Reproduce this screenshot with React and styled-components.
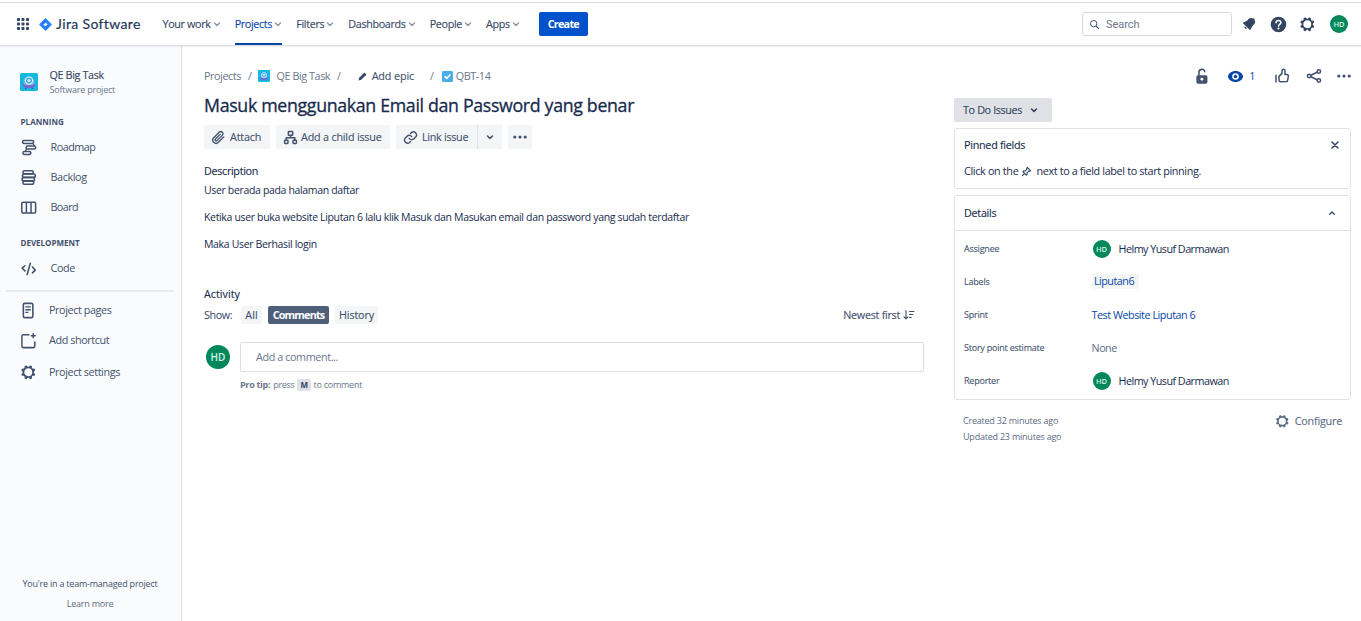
import React from "react";
import styled, { createGlobalStyle } from "styled-components";

const Global = createGlobalStyle`
  *, *::before, *::after { box-sizing: border-box; }
  html, body { margin: 0; height: 100%; overflow: hidden; background: #fff; }
  body { font-family: "Open Sans", "Noto Sans", sans-serif; font-size: 11px; color: #172b4d; }
  svg { display: block; flex: none; }
`;

const T = styled.span`
  white-space: nowrap;
  font-size: ${(p) => p.$s || 10.8}px;
  font-weight: ${(p) => p.$b || 400};
  letter-spacing: ${(p) => p.$ls ?? -0.4}px;
  color: ${(p) => p.$c || "inherit"};
  line-height: 14px;
`;
const Medium = styled(T)`
  -webkit-text-stroke: 0.12px currentColor;
`;
const Small = styled(T)`
  font-size: 9px;
  letter-spacing: ${(p) => p.$ls ?? -0.22}px;
`;
const FieldName = styled(Small)`
  color: #42526e;
  padding-top: 1px;
  -webkit-text-stroke: 0.1px currentColor;
`;

const Page = styled.div`
  height: 621px;
  padding-top: 2px;
  display: flex;
  flex-direction: column;
`;
const Header = styled.header`
  height: 44px;
  flex: none;
  display: flex;
  align-items: center;
  border-top: 1px solid #d5d7da;
  border-bottom: 1px solid #dcdee3;
  box-shadow: 0 1px 1px rgba(9, 30, 66, 0.06);
  padding: 0 13px 0 16px;
  color: #344563;
  position: relative;
`;
const Brand = styled.div`
  display: flex;
  align-items: center;
  width: 146.5px;
  color: #253858;
`;
const BrandName = styled(T)`
  font-family: Lato, sans-serif;
  font-size: 14px;
  letter-spacing: 0.36px;
  -webkit-text-stroke: 0.2px currentColor;
  margin-left: 4px;
`;
const Nav = styled.nav`
  display: flex;
  height: 42px;
  gap: 14.1px;
`;
const NavItem = styled.div`
  display: flex;
  align-items: center;
  gap: 2px;
  color: ${(p) => (p.$active ? "#0747a6" : "#344563")};
  box-shadow: ${(p) => (p.$active ? "inset 0 -2px 0 #0747a6" : "none")};
`;
const CreateButton = styled.button`
  margin-left: 19px;
  width: 49px;
  height: 24px;
  border: 0;
  border-radius: 2px;
  background: #0052cc;
  color: #fff;
  padding: 0;
  font-family: inherit;
  display: flex;
  align-items: center;
  justify-content: center;
`;
const SearchBox = styled.div`
  margin-left: auto;
  width: 150px;
  height: 24px;
  border: 1px solid #d4d8de;
  border-radius: 3px;
  display: flex;
  align-items: center;
  gap: 6px;
  padding: 1px 0 0 6px;
  color: #6b778c;
`;
const SearchText = styled(T)`
  font-family: Roboto, sans-serif;
  font-size: 11px;
  letter-spacing: -0.05px;
`;
const HeaderIcons = styled.div`
  display: flex;
  align-items: center;
  gap: 10.7px;
  margin-left: 8px;
`;
const Avatar = styled.div`
  width: ${(p) => p.$d}px;
  height: ${(p) => p.$d}px;
  border-radius: 50%;
  background: #00875a;
  color: #d9f2e7;
  display: flex;
  align-items: center;
  justify-content: center;
  font: 600 ${(p) => p.$f}px "Open Sans", sans-serif;
  flex: none;
`;
const HeaderAvatar = styled(Avatar)`
  margin-left: 2px;
`;

const Body = styled.div`
  flex: 1;
  display: flex;
  min-height: 0;
`;
const Sidebar = styled.aside`
  width: 182px;
  flex: none;
  background: #fafbfc;
  border-right: 1px solid #dfe1e6;
  display: flex;
  flex-direction: column;
  color: #42526e;
`;
const ProjectHead = styled.div`
  display: flex;
  align-items: center;
  gap: 11.5px;
  padding-left: 20px;
  margin-top: 21px;
  height: 30px;
`;
const ProjectNames = styled.div`
  display: flex;
  flex-direction: column;
  gap: 1px;
`;
const SectionTitle = styled.div`
  display: flex;
  align-items: center;
  height: 14px;
  padding-left: 20.5px;
  margin-top: ${(p) => p.$mt}px;
`;
const SideItem = styled.div`
  display: flex;
  align-items: center;
  height: 30px;
  padding-left: 19px;
  gap: ${(p) => p.$gap || 12.5}px;
  margin-top: ${(p) => p.$mt || 0}px;
`;
const SideRule = styled.div`
  height: 2px;
  background: #e8eaed;
  margin: 7px 7px 0 6px;
`;
const SideFooter = styled.div`
  margin-top: auto;
  height: 44px;
  display: flex;
  flex-direction: column;
  align-items: center;
  gap: 6px;
  padding-right: 1px;
`;

const Main = styled.main`
  flex: 1;
  display: flex;
  gap: 30px;
  padding: 20px 0 0 22px;
`;
const Content = styled.section`
  width: 720px;
`;
const Crumbs = styled.div`
  display: flex;
  align-items: center;
  height: 20px;
  color: #6b778c;
`;
const Gap = styled.span`
  width: ${(p) => p.$w}px;
  flex: none;
`;
const Title = styled.h1`
  margin: 5px 0 6px;
  height: 28px;
  display: flex;
  align-items: center;
`;
const TitleText = styled(T)`
  font-size: 17.8px;
  letter-spacing: -0.34px;
  -webkit-text-stroke: 0.3px currentColor;
`;
const Actions = styled.div`
  display: flex;
  gap: 6px;
`;
const ActionButton = styled.div`
  height: 24px;
  width: ${(p) => p.$w}px;
  background: #f4f5f7;
  border-radius: 2px;
  display: flex;
  align-items: center;
  gap: ${(p) => p.$gap ?? 4}px;
  padding-left: 7px;
  color: #42526e;
`;
const SplitButton = styled.div`
  display: flex;
  gap: 1px;
  background: #dfe1e6;
`;
const IconButton = styled.div`
  width: 24px;
  height: 24px;
  background: #f4f5f7;
  border-radius: 2px;
  color: #42526e;
  display: flex;
  align-items: center;
  justify-content: center;
`;
const Line = styled.div`
  display: flex;
  align-items: center;
  height: 14px;
  margin-top: ${(p) => p.$mt}px;
`;
const Paragraph = styled(T)`
  font-size: 10.5px;
  letter-spacing: -0.34px;
`;
const ShowRow = styled.div`
  display: flex;
  align-items: center;
  height: 18px;
  margin-top: 5px;
`;
const ShowLabel = styled.div`
  width: 37px;
  display: flex;
  color: #344563;
`;
const Pill = styled.div`
  height: 18px;
  width: ${(p) => p.$w}px;
  border-radius: 2px;
  display: flex;
  align-items: center;
  justify-content: center;
  background: ${(p) => (p.$active ? "#505f79" : "#f4f5f7")};
  color: ${(p) => (p.$active ? "#fff" : "#42526e")};
  margin-right: 6px;
`;
const SortBy = styled.div`
  margin-left: auto;
  margin-right: 9px;
  display: flex;
  align-items: center;
  gap: 3px;
  color: #42526e;
`;
const CommentRow = styled.div`
  display: flex;
  align-items: center;
  gap: 10px;
  margin-top: 18px;
  padding-left: 2px;
`;
const CommentBox = styled.div`
  flex: 1;
  height: 30px;
  border: 1px solid #dadde2;
  border-radius: 2px;
  padding-left: 15px;
  display: flex;
  align-items: center;
`;
const ProTip = styled.div`
  display: flex;
  align-items: center;
  height: 14px;
  margin: 6px 0 0 36px;
  color: #6b778c;
`;
const Key = styled.span`
  width: 14px;
  height: 12px;
  margin: 0 2.5px;
  background: #dfe1e6;
  border-radius: 2px;
  color: #344563;
  display: flex;
  align-items: center;
  justify-content: center;
`;

const Side = styled.section`
  width: 397px;
`;
const Tools = styled.div`
  height: 20px;
  display: flex;
  align-items: center;
  justify-content: flex-end;
  color: #42526e;
  margin-right: -1px;
`;
const StatusButton = styled.div`
  margin-top: 12px;
  width: 98px;
  height: 24px;
  border-radius: 2px;
  background: #dfe1e6;
  color: #344563;
  display: flex;
  align-items: center;
  gap: 8px;
  padding-left: 9px;
`;
const Panel = styled.div`
  border: 1px solid #dfe1e6;
  border-radius: 3px;
  margin-top: 6px;
  height: ${(p) => p.$h}px;
`;
const PanelHead = styled.div`
  height: ${(p) => p.$h}px;
  display: flex;
  align-items: center;
  justify-content: space-between;
  padding: 0 ${(p) => p.$pr}px 0 9px;
  border-bottom: ${(p) => (p.$line ? "1px solid #dfe1e6" : "0")};
`;
const PanelText = styled.div`
  display: flex;
  align-items: center;
  height: 20px;
  padding-left: 9px;
`;
const Fields = styled.div`
  padding-top: 1px;
`;
const Field = styled.div`
  height: 33px;
  display: grid;
  grid-template-columns: 127.5px 1fr;
  align-items: center;
  padding-left: 9px;
`;
const Person = styled.div`
  display: flex;
  align-items: center;
  gap: 8px;
  padding-left: 1px;
`;
const Label = styled.div`
  width: 47px;
  height: 15px;
  border-radius: 2px;
  background: #f4f5f7;
  display: flex;
  align-items: center;
  justify-content: center;
  padding: 0 2px 2px 0;
`;
const Meta = styled.div`
  display: flex;
  justify-content: space-between;
  padding: 13px 9px 0;
  color: #5e6c84;
`;
const Dates = styled.div`
  display: flex;
  flex-direction: column;
  gap: 2px;
  padding-top: 1px;
`;
const Configure = styled.div`
  display: flex;
  align-items: center;
  gap: 4px;
  height: 16px;
`;

const Svg = ({ w = 19, h, vb = "0 0 24 24", children }) => (
  <svg width={w} height={h || w} viewBox={vb} fill="none">{children}</svg>
);
const Chevron = ({ up, w = 8, c = "#8993a4", sw = 1.4 }) => (
  <Svg w={w} vb="0 0 8 8">
    <path d={up ? "M1.7 5.2 4 3 6.3 5.2" : "M1.5 3 4 5.4 6.5 3"} stroke={c} strokeWidth={sw} strokeLinecap="round" strokeLinejoin="round" />
  </Svg>
);
const Gear = ({ w = 18 }) => (
  <Svg w={w}>
    <path fill="currentColor" fillRule="evenodd" d="M11.701 16.7a5.002 5.002 0 110-10.003 5.002 5.002 0 010 10.004m8.368-3.117a1.995 1.995 0 01-1.346-1.885c0-.876.563-1.613 1.345-1.885a.48.48 0 00.315-.574 8.947 8.947 0 00-.836-1.993.477.477 0 00-.598-.195 2.04 2.04 0 01-1.29.08 1.988 1.988 0 01-1.404-1.395 2.04 2.04 0 01.076-1.297.478.478 0 00-.196-.597 8.98 8.98 0 00-1.975-.826.479.479 0 00-.574.314 1.995 1.995 0 01-1.885 1.346 1.994 1.994 0 01-1.884-1.345.482.482 0 00-.575-.315c-.708.2-1.379.485-2.004.842a.47.47 0 00-.198.582A2.002 2.002 0 014.445 7.06a.478.478 0 00-.595.196 8.946 8.946 0 00-.833 1.994.48.48 0 00.308.572 1.995 1.995 0 011.323 1.877c0 .867-.552 1.599-1.324 1.877a.479.479 0 00-.308.57 8.99 8.99 0 00.723 1.79.477.477 0 00.624.194c.595-.273 1.343-.264 2.104.238.117.077.225.185.302.3.527.8.512 1.58.198 2.188a.473.473 0 00.168.628 8.946 8.946 0 002.11.897.474.474 0 00.57-.313 1.995 1.995 0 011.886-1.353c.878 0 1.618.567 1.887 1.353a.475.475 0 00.57.313 8.964 8.964 0 002.084-.883.473.473 0 00.167-.631c-.318-.608-.337-1.393.191-2.195.077-.116.185-.225.302-.302.772-.511 1.527-.513 2.125-.23a.477.477 0 00.628-.19 8.925 8.925 0 00.728-1.793.478.478 0 00-.314-.573" />
  </Svg>
);
const Dots = () => (
  <Svg w={16} h={6} vb="0 0 16 6">
    <g fill="currentColor"><circle cx="2.8" cy="3" r="1.6" /><circle cx="8" cy="3" r="1.6" /><circle cx="13.2" cy="3" r="1.6" /></g>
  </Svg>
);
const ProjectIcon = ({ w }) => (
  <Svg w={w} vb="0 0 18 18">
    <rect width="18" height="18" rx="1.6" fill="#12b9dc" />
    <path d="M3.6 12V8.600a5.400 5.400 0 0 1 10.800 0V12z" fill="#6fb6ee" />
    <circle cx="9" cy="7.600" r="3.600" fill="#3fa9e0" stroke="#e4f6ff" strokeWidth="1.100" />
    <circle cx="9" cy="7.400" r="1.500" fill="#e4f6ff" />
    <path d="M2.600 10.600c1.500 1.300 3.600 2 6.400 2s4.900-.7 6.400-2c.4 2.800-1.800 4.600-6.400 4.600s-6.800-1.800-6.400-4.600z" fill="#7a66cc" />
    <path d="M5.600 14.800v1.200M12.400 14.800v1.200" stroke="#5243aa" strokeWidth="1.200" />
  </Svg>
);

const navItems = ["Your work", "Projects", "Filters", "Dashboards", "People", "Apps"];
const gridSteps = [1, 5.5, 10];

export default function App() {
  return (
    <>
      <Global />
      <Page>
        <Header>
          <Brand>
            <Svg w={14} vb="0 0 14 14">
              {gridSteps.map((y) => gridSteps.map((x) => <rect key={x + "-" + y} x={x} y={y} width="3" height="3" rx=".8" fill="#344563" />))}
            </Svg>
            <Gap $w={9} />
            <Svg w={13} vb="0 0 13 13">
              <path d="M6.5 0 13 6.500 6.500 13 0 6.500z" fill="#2684ff" />
              <path d="M6.500 4.400 8.600 6.500 6.500 8.600 4.400 6.500z" fill="#fff" />
              <path d="M6.500 1.500v2.900L4.400 6.500 3 4.800zM6.500 11.500V8.600l2.100-2.100L10 8.200z" fill="#0f5fd8" opacity=".4" />
            </Svg>
            <BrandName>Jira Software</BrandName>
          </Brand>
          <Nav>
            {navItems.map((n) => (
              <NavItem key={n} $active={n === "Projects"}>
                <Medium $ls={-0.36}>{n}</Medium>
                <Chevron />
              </NavItem>
            ))}
          </Nav>
          <CreateButton><T $b={700} $ls={-0.75}>Create</T></CreateButton>
          <SearchBox>
            <Svg w={11} vb="0 0 11 11">
              <circle cx="4.700" cy="4.700" r="3.200" stroke="#42526e" strokeWidth="1" />
              <path d="m7.200 7.200 2.300 2.300" stroke="#42526e" strokeWidth="1.100" strokeLinecap="round" />
            </Svg>
            <SearchText>Search</SearchText>
          </SearchBox>
          <HeaderIcons>
            <Svg w={18}>
              <path d="M6.485 17.669a2 2 0 0 0 2.829 0l-2.829-2.829a2 2 0 0 0 0 2.829zm4.897-12.191-.725.725c-.782.782-2.210 1.813-3.206 2.311l-3.017 1.509c-.495.248-.584.774-.187 1.171l8.556 8.556c.398.396.922.313 1.171-.188l1.510-3.016c.494-.988 1.526-2.420 2.311-3.206l.725-.726a5.048 5.048 0 0 0 .640-6.356 1.010 1.010 0 1 0-1.354-1.494c-.023.025-.046.049-.066.075a5.043 5.043 0 0 0-2.788-.840 5.036 5.036 0 0 0-3.570 1.478z" fill="#344563" />
            </Svg>
            <Svg w={19}>
              <circle cx="12" cy="12" r="9.800" fill="#344563" />
              <path d="M9 9.800C9 8 10.300 6.900 12 6.900s3 1.100 3 2.700c0 2.100-3 2.200-3 4.400" stroke="#fff" strokeWidth="2.100" strokeLinecap="round" />
              <circle cx="12" cy="17" r="1.300" fill="#fff" />
            </Svg>
            <Gear w={19} />
            <HeaderAvatar $d={18} $f={7.5}>HD</HeaderAvatar>
          </HeaderIcons>
        </Header>
        <Body>
          <Sidebar>
            <ProjectHead>
              <ProjectIcon w={18} />
              <ProjectNames>
                <Medium $c="#344563" $ls={-0.37}>QE Big Task</Medium>
                <Small $c="#6b778c">Software project</Small>
              </ProjectNames>
            </ProjectHead>
            <SectionTitle $mt={18}><T $s={8} $b={700} $ls={0.05}>PLANNING</T></SectionTitle>
            <SideItem $mt={3}>
              <Svg><g stroke="currentColor" strokeWidth="1.900"><rect x="4.500" y="3.200" width="14" height="3.800" rx="1.900" /><rect x="9" y="10.100" width="12" height="3.800" rx="1.900" /><rect x="5" y="17" width="10" height="3.800" rx="1.900" /><path d="M17.500 6.500 19.500 10M9.500 13.500 8 17" strokeWidth="1.600" /></g></Svg>
              <T $ls={-0.5}>Roadmap</T>
            </SideItem>
            <SideItem>
              <Svg><g stroke="currentColor" strokeWidth="2"><rect x="5" y="3.500" width="13" height="3.800" rx="1.900" /><rect x="4.500" y="7.500" width="16" height="4.300" rx="1.500" /><rect x="4" y="12" width="15.500" height="4.300" rx="1.500" /><rect x="5" y="16.500" width="13.500" height="4" rx="1.500" /></g></Svg>
              <T>Backlog</T>
            </SideItem>
            <SideItem>
              <Svg><g stroke="currentColor" strokeWidth="1.900"><rect x="3.500" y="5.300" width="17.500" height="13.500" rx="1.500" /><path d="M9.300 5.300v13.500M15.200 5.300v13.500" /></g></Svg>
              <T $ls={-0.6}>Board</T>
            </SideItem>
            <SectionTitle $mt={14}><T $s={8} $b={700} $ls={0}>DEVELOPMENT</T></SectionTitle>
            <SideItem $mt={3}>
              <Svg><path d="m7.500 8.500-3.500 3L7.500 15M17 10l3.500 4-3.500 3.500M14.300 5.500l-4 14" stroke="currentColor" strokeWidth="2" strokeLinecap="round" strokeLinejoin="round" /></Svg>
              <T>Code</T>
            </SideItem>
            <SideRule />
            <SideItem $mt={3} $gap={11}>
              <Svg><rect x="5.500" y="3" width="12" height="18" rx="1.800" stroke="currentColor" strokeWidth="2" /><path d="M8 7.500h7M8 11h7M8 14.300h4" stroke="currentColor" strokeWidth="1.700" /></Svg>
              <T>Project pages</T>
            </SideItem>
            <SideItem $gap={11}>
              <Svg><path d="M12.500 4.800H5.500a1.800 1.800 0 0 0-1.800 1.800v12.600A1.800 1.800 0 0 0 5.500 21h12.700a1.800 1.800 0 0 0 1.800-1.800V14M18 3.500v5M15.500 6h5" stroke="currentColor" strokeWidth="1.900" strokeLinecap="round" /></Svg>
              <T>Add shortcut</T>
            </SideItem>
            <SideItem $mt={2} $gap={11}>
              <Gear w={19} />
              <T>Project settings</T>
            </SideItem>
            <SideFooter>
              <Small $c="#42526e">You're in a team-managed project</Small>
              <Small $c="#5e6c84">Learn more</Small>
            </SideFooter>
          </Sidebar>
          <Main>
            <Content>
              <Crumbs>
                <T $ls={-0.43}>Projects</T><Gap $w={7} /><T>/</T><Gap $w={7} />
                <ProjectIcon w={12} /><Gap $w={6} />
                <T $ls={-0.43}>QE Big Task</T><Gap $w={7} /><T>/</T><Gap $w={17} />
                <Svg w={9} vb="0 0 9 9"><path d="M.5 8.500 1.200 5.800 5.800 1.200a1 1 0 0 1 1.400 0l.6.6a1 1 0 0 1 0 1.400L3.200 7.800z" fill="#344563" /></Svg>
                <Gap $w={5} /><Medium $c="#42526e" $ls={-0.12}>Add epic</Medium><Gap $w={16} /><T>/</T><Gap $w={8} />
                <Svg w={11} vb="0 0 11 11"><rect width="11" height="11" rx="1.300" fill="#4bade8" /><path d="m3 5.600 1.800 1.800 3.300-3.700" stroke="#fff" strokeWidth="1.500" strokeLinecap="round" strokeLinejoin="round" /></Svg>
                <Gap $w={3} /><T>QBT-14</T>
              </Crumbs>
              <Title><TitleText>Masuk menggunakan Email dan Password yang benar</TitleText></Title>
              <Actions>
                <ActionButton $w={66}>
                  <Svg w={15}><path d="m20.500 11-8.700 8.700a5.200 5.200 0 0 1-7.400-7.400l8.700-8.700a3.500 3.500 0 0 1 5 5L9.700 17a1.700 1.700 0 0 1-2.500-2.500l7.500-7.500" stroke="currentColor" strokeWidth="2.200" strokeLinecap="round" /></Svg>
                  <Medium $ls={-0.2}>Attach</Medium>
                </ActionButton>
                <ActionButton $w={114} $gap={3}>
                  <Svg w={15}><g stroke="currentColor" strokeWidth="2.400"><rect x="8.500" y="2.500" width="7" height="6" rx="1" /><rect x="2.500" y="16.500" width="5.500" height="5" rx="1" /><rect x="16" y="16.500" width="5.500" height="5" rx="1" /><path d="M12 8.500v4M5.200 16.500v-4h13.600v4" /></g></Svg>
                  <Medium $ls={-0.2}>Add a child issue</Medium>
                </ActionButton>
                <SplitButton>
                  <ActionButton $w={81}>
                    <Svg w={15}><path d="M10 13.500a5 5 0 0 0 7.500.5l3-3a5 5 0 0 0-7-7L12 5.500M14 10.500a5 5 0 0 0-7.500-.5l-3 3a5 5 0 0 0 7 7l1.500-1.500" stroke="currentColor" strokeWidth="2.300" strokeLinecap="round" /></Svg>
                    <Medium $ls={-0.3}>Link issue</Medium>
                  </ActionButton>
                  <IconButton><Chevron c="#42526e" sw={1.5} /></IconButton>
                </SplitButton>
                <IconButton><Dots /></IconButton>
              </Actions>
              <Line $mt={15}><Medium $ls={-0.33}>Description</Medium></Line>
              <Line $mt={5}><Paragraph $ls={-0.4}>User berada pada halaman daftar</Paragraph></Line>
              <Line $mt={13}><Paragraph>Ketika user buka website Liputan 6 lalu klik Masuk dan Masukan email dan password yang sudah terdaftar</Paragraph></Line>
              <Line $mt={13}><Paragraph>Maka User Berhasil login</Paragraph></Line>
              <Line $mt={36}><Medium $ls={0}>Activity</Medium></Line>
              <ShowRow>
                <ShowLabel><T>Show:</T></ShowLabel>
                <Pill $w={21}><Medium $ls={0}>All</Medium></Pill>
                <Pill $w={61} $active><T $b={700} $ls={-0.85}>Comments</T></Pill>
                <Pill $w={43}><Medium $ls={-0.15}>History</Medium></Pill>
                <SortBy>
                  <Medium $ls={-0.28}>Newest first</Medium>
                  <Svg w={12} vb="0 0 12 12"><path d="M3 1.500v8M1 7.800l2 2 2-2M6.500 2.500H11M6.500 5.500h3.300M6.500 8.500h1.800" stroke="currentColor" strokeWidth="1.100" strokeLinecap="round" strokeLinejoin="round" /></Svg>
                </SortBy>
              </ShowRow>
              <CommentRow>
                <Avatar $d={24} $f={10}>HD</Avatar>
                <CommentBox><T $c="#6b778c">Add a comment...</T></CommentBox>
              </CommentRow>
              <ProTip>
                <Small $b={700} $ls={-0.3}>Pro tip:</Small><Gap $w={3} /><Small $ls={-0.3}>press</Small><Key><T $s={8} $b={700}>M</T></Key><Small $ls={-0.25}>to comment</Small>
              </ProTip>
            </Content>
            <Side>
              <Tools>
                <Svg><rect x="5.500" y="10.300" width="14" height="10.700" rx="2" fill="currentColor" /><path d="M8.800 10.500V6.800a3.700 3.700 0 0 1 7.300-1" stroke="currentColor" strokeWidth="2" strokeLinecap="round" /><circle cx="12.500" cy="15.500" r="1.800" fill="#fff" /></Svg>
                <Gap $w={15} />
                <Svg><path d="M12 5c5 0 9.500 3.500 9.500 7s-4.500 7-9.500 7-9.500-3.500-9.500-7S7 5 12 5z" fill="#0747a6" /><circle cx="12" cy="12" r="3.200" stroke="#fff" strokeWidth="1.900" /></Svg>
                <Gap $w={4} /><T $c="#0747a6">1</T><Gap $w={18} />
                <Svg w={18}><path d="M4 11v9M8 12.500l4-4V5a2 2 0 0 1 4 0v5h2.500a2 2 0 0 1 2 2.300l-1 5.500a2 2 0 0 1-2 1.700H10a2 2 0 0 1-2-2z" stroke="currentColor" strokeWidth="2" strokeLinejoin="round" strokeLinecap="round" /></Svg>
                <Gap $w={14} />
                <Svg w={18}><g stroke="currentColor" strokeWidth="2"><circle cx="5.500" cy="12" r="2.300" /><circle cx="18.500" cy="6" r="2.300" /><circle cx="18.500" cy="18" r="2.300" /><path d="m7.800 11 8.400-4M7.800 13l8.400 4" /></g></Svg>
                <Gap $w={13} />
                <Dots />
              </Tools>
              <StatusButton><Medium $ls={-0.37}>To Do Issues</Medium><Chevron c="#344563" sw={1.6} /></StatusButton>
              <Panel $h={61}>
                <PanelHead $h={32} $pr={11}>
                  <Medium $ls={-0.28}>Pinned fields</Medium>
                  <Svg w={8} vb="0 0 8 8"><path d="m1 1 6 6M7 1 1 7" stroke="#344563" strokeWidth="1.500" strokeLinecap="round" /></Svg>
                </PanelHead>
                <PanelText>
                  <T $ls={-0.33}>Click on the</T><Gap $w={2.5} />
                  <Svg w={11}><path d="m13.500 3 7.500 7.500-2.500 1-1.500-.5-4 4 .5 3-2 2-7.500-7.500 2-2 3 .5 4-4-.5-1.500zM7 17l-4 4" stroke="#344563" strokeWidth="2.400" strokeLinejoin="round" strokeLinecap="round" /></Svg>
                  <Gap $w={4.5} /><T $ls={-0.35}>next to a field label to start pinning.</T>
                </PanelText>
              </Panel>
              <Panel $h={205}>
                <PanelHead $h={35} $pr={14} $line><Medium $ls={-0.28}>Details</Medium><Chevron up w={8} c="#344563" sw={1.3} /></PanelHead>
                <Fields>
                  <Field><FieldName>Assignee</FieldName><Person><Avatar $d={18} $f={7.5}>HD</Avatar><T $ls={-0.54}>Helmy Yusuf Darmawan</T></Person></Field>
                  <Field><FieldName>Labels</FieldName><Label><T $c="#0747a6" $ls={-0.5}>Liputan6</T></Label></Field>
                  <Field><FieldName>Sprint</FieldName><T $c="#0747a6" $ls={-0.47}>Test Website Liputan 6</T></Field>
                  <Field><FieldName>Story point estimate</FieldName><T $c="#5e6c84" $ls={-0.5}>None</T></Field>
                  <Field><FieldName>Reporter</FieldName><Person><Avatar $d={18} $f={7.5}>HD</Avatar><T $ls={-0.54}>Helmy Yusuf Darmawan</T></Person></Field>
                </Fields>
              </Panel>
              <Meta>
                <Dates><Small>Created 32 minutes ago</Small><Small>Updated 23 minutes ago</Small></Dates>
                <Configure><Gear w={17} /><Medium $ls={-0.22}>Configure</Medium></Configure>
              </Meta>
            </Side>
          </Main>
        </Body>
      </Page>
    </>
  );
}
